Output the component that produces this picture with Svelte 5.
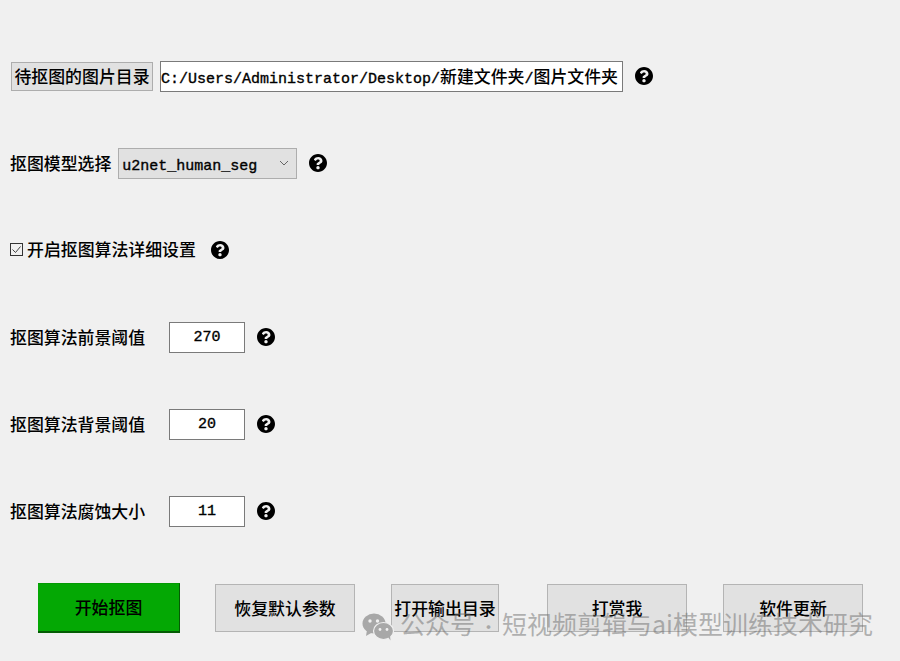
<script>
  const help = "M504 256c0 136.997-111.043 248-248 248S8 392.997 8 256C8 119.083 119.043 8 256 8s248 111.083 248 248zM262.655 90c-54.497 0-89.255 22.957-116.549 63.758-3.536 5.286-2.353 12.415 2.715 16.258l34.699 26.31c5.205 3.947 12.621 3.008 16.665-2.122 17.864-22.658 30.113-35.797 57.303-35.797 20.429 0 45.698 13.148 45.698 32.958 0 14.976-12.363 22.667-32.534 33.976C247.128 238.528 216 254.941 216 296v4c0 6.627 5.373 12 12 12h56c6.627 0 12-5.373 12-12v-1.333c0-28.462 83.186-29.647 83.186-106.667 0-58.002-60.165-102-116.531-102zM256 338c-25.365 0-46 20.635-46 46 0 25.364 20.635 46 46 46s46-20.636 46-46c0-25.365-20.635-46-46-46z";
  const params = [
    { label: "抠图算法前景阈值", value: "270" },
    { label: "抠图算法背景阈值", value: "20" },
    { label: "抠图算法腐蚀大小", value: "11" }
  ];
</script>

{#snippet helpIcon(cls)}
  <svg class="help {cls}" viewBox="8 8 496 496" aria-label="帮助"><path d={help} fill="#000" /></svg>
{/snippet}

<main class="page">
  <div class="row">
    <button class="pick">待抠图的图片目录</button>
    <div class="path"><span class="mono">C:/Users/Administrator/Desktop/</span>新建文件夹<span class="mono">/</span>图片文件夹</div>
    {@render helpIcon("h-up")}
  </div>

  <div class="row">
    <span class="label">抠图模型选择</span>
    <div class="select">
      <span class="mono">u2net_human_seg</span>
      <svg class="chev" viewBox="0 0 10 6"><path d="M1 1l4 4 4-4" fill="none" stroke="#666" stroke-width="1" /></svg>
    </div>
    {@render helpIcon("h-up")}
  </div>

  <div class="row">
    <label class="check">
      <span class="box">
        <svg viewBox="0 0 11 11"><path d="M1.500 5.500l3 3 5-6" fill="none" stroke="#444" stroke-width="1" /></svg>
      </span>
      <span class="label up">开启抠图算法详细设置</span>
    </label>
    {@render helpIcon("h-check")}
  </div>

  {#each params as p}
    <div class="row">
      <span class="label param">{p.label}</span>
      <div class="num mono">{p.value}</div>
      {@render helpIcon("h-up")}
    </div>
  {/each}

  <div class="actions">
    <button class="start">开始抠图</button>
    <button class="act w140 m35">恢复默认参数</button>
    <button class="act w108 m36">打开输出目录</button>
    <button class="act w140 m48">打赏我</button>
    <button class="act w140 m36">软件更新</button>
  </div>

  <div class="watermark">
    <svg class="wechat" viewBox="0 0 32 28">
      <ellipse cx="12" cy="10.500" rx="11.500" ry="10" fill="#a8a8a8" />
      <path d="M5 17l-1 6 6-3.500z" fill="#a8a8a8" />
      <ellipse cx="21.500" cy="18" rx="10" ry="8.500" fill="#a8a8a8" stroke="#f0f0f0" stroke-width="1.200" />
      <path d="M26 24l2.500 3.500-.5-5z" fill="#a8a8a8" />
      <circle cx="8" cy="8" r="1.700" fill="#f0f0f0" />
      <circle cx="15.500" cy="8" r="1.700" fill="#f0f0f0" />
      <circle cx="18" cy="16.500" r="1.400" fill="#f0f0f0" />
      <circle cx="25" cy="16.500" r="1.400" fill="#f0f0f0" />
    </svg>
    <span class="wm-text">公众号<span class="dot">·</span>短视频剪辑与ai模型训练技术研究</span>
  </div>
</main>

<style>
  :global(body) {
    margin: 0;
    background: #f0f0f0;
  }
  .page {
    position: relative;
    width: 900px;
    height: 661px;
    box-sizing: border-box;
    padding: 61px 0 0 10px;
    display: flex;
    flex-direction: column;
    gap: 56px;
    overflow: hidden;
    background: #f0f0f0;
    color: #000;
    font-family: "Noto Sans CJK SC", sans-serif;
    font-size: 16.9px;
    font-weight: 500;
  }
  .row {
    display: flex;
    align-items: center;
    height: 31px;
  }
  .mono {
    font-family: "Liberation Mono", "Noto Sans CJK SC", monospace;
    font-size: 15px;
    font-weight: 400;
    -webkit-text-stroke: 0.35px #000;
  }
  button {
    font: inherit;
    color: #000;
    padding: 0 0 2px;
    box-sizing: border-box;
  }
  .pick {
    width: 142px;
    height: 29px;
    margin-left: 1px;
    background: #e1e1e1;
    border: 1px solid #adadad;
    white-space: nowrap;
    padding: 0 0 3px;
  }
  .path {
    width: 463px;
    height: 31px;
    margin-left: 7px;
    box-sizing: border-box;
    background: #fff;
    border: 1px solid #7a7a7a;
    line-height: 27px;
    white-space: nowrap;
    overflow: hidden;
  }
  .help {
    width: 18px;
    height: 18px;
    display: block;
    flex: none;
  }
  .h-up {
    margin: -2px 0 0 12px;
  }
  .h-check {
    margin: -2px 0 0 15px;
  }
  .label {
    white-space: nowrap;
    padding-bottom: 2px;
  }
  .up {
    padding-bottom: 4px;
  }
  .select {
    position: relative;
    width: 179px;
    height: 31px;
    margin-left: 7px;
    box-sizing: border-box;
    background: #e1e1e1;
    border: 1px solid #adadad;
    padding-left: 3px;
    line-height: 28px;
  }
  .chev {
    position: absolute;
    right: 7px;
    top: 11px;
    width: 10px;
    height: 6px;
  }
  .check {
    display: flex;
    align-items: center;
  }
  .box {
    width: 13px;
    height: 13px;
    box-sizing: border-box;
    border: 1px solid #333;
    background: #f0f0f0;
    display: block;
    margin: -2px 4px 0 0;
  }
  .box svg {
    display: block;
    width: 11px;
    height: 11px;
  }
  .param {
    width: 159px;
  }
  .num {
    width: 76px;
    height: 31px;
    box-sizing: border-box;
    background: #fff;
    border: 1px solid #7a7a7a;
    text-align: center;
    line-height: 29px;
  }
  .actions {
    display: flex;
    align-items: center;
    height: 50px;
    margin-left: 28px;
  }
  .start {
    width: 142px;
    height: 50px;
    background: #04a804;
    border: none;
    border-right: 1px solid #045c04;
    border-bottom: 2px solid #045c04;
    border-top: 1px solid #049a04;
  }
  .act {
    height: 48px;
    background: #e1e1e1;
    border: 1px solid #b4b4b4;
    white-space: nowrap;
  }
  .w140 { width: 140px; }
  .w108 { width: 108px; }
  .m35 { margin-left: 35px; }
  .m36 { margin-left: 36px; }
  .m48 { margin-left: 48px; }
  .watermark {
    position: absolute;
    left: 362px;
    top: 610px;
    display: flex;
    align-items: center;
    gap: 6px;
    height: 30px;
    font-size: 25px;
    font-weight: 400;
    color: rgba(110, 110, 110, 0.5);
    white-space: nowrap;
    pointer-events: none;
  }
  .wm-text {
    padding-bottom: 4px;
  }
  .dot {
    display: inline-block;
    width: 27px;
    text-align: center;
    font-size: 18px;
  }
  .wechat {
    width: 32px;
    height: 28px;
    display: block;
    margin-top: 3px;
  }
</style>
